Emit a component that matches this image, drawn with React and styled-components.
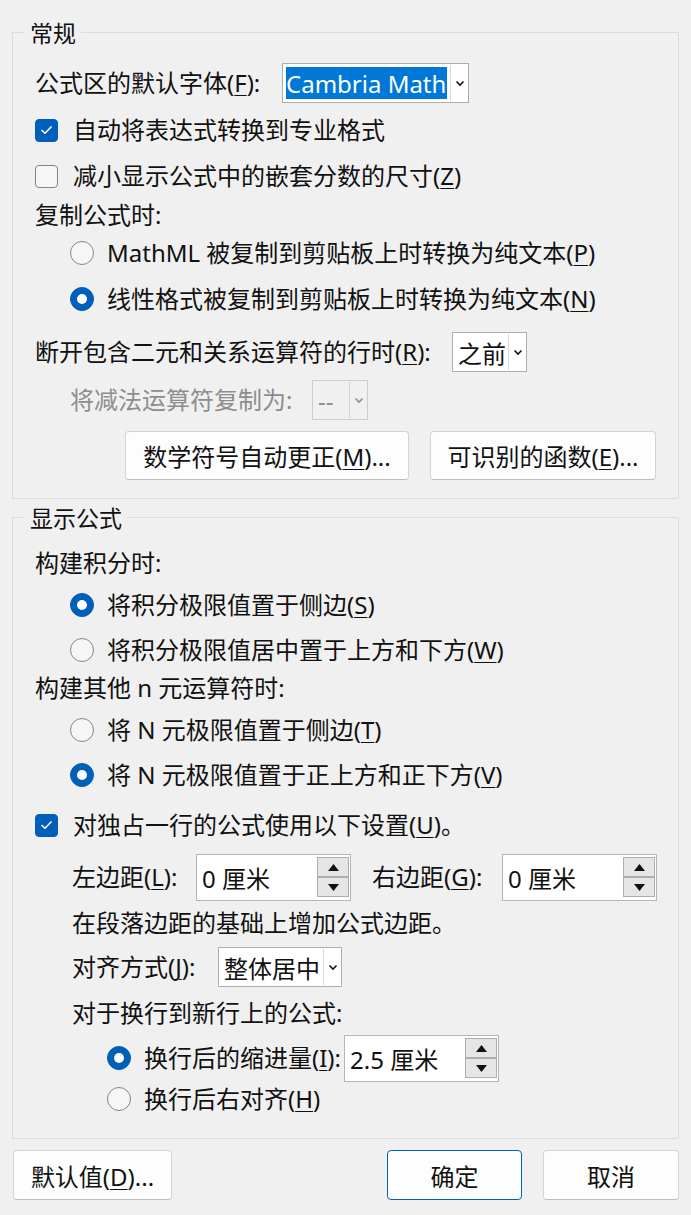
import React from 'react'
import styled, { createGlobalStyle } from 'styled-components'

const GlobalStyle = createGlobalStyle`
  html, body {
    margin: 0;
    padding: 0;
    background: #f0f0f0;
  }
  body {
    font-family: "Noto Sans", "Noto Sans CJK SC", sans-serif;
    font-size: 24px;
    color: #111;
  }
`

// 작은 아이콘들
const Chevron = ({ color = '#111' }) => (
  <svg width="10" height="7" viewBox="0 0 10 7">
    <path d="M1.5 1.5 L5 5 L8.5 1.5" fill="none" stroke={color} strokeWidth="1.6" />
  </svg>
)

const Tri = ({ down }) => (
  <svg width="11" height="7" viewBox="0 0 11 7">
    {down ? <polygon points="0,0 11,0 5.5,7" fill="#111" /> : <polygon points="0,7 11,7 5.5,0" fill="#111" />}
  </svg>
)

const Check = () => (
  <svg width="13" height="10" viewBox="0 0 13 10">
    <path d="M1.5 5 L5 8.3 L11.5 1.5" fill="none" stroke="#fff" strokeWidth="1.5" />
  </svg>
)

const App = () => {
  return (
    <>
      <GlobalStyle />
      <Dialog>
        <Group $top={32}>
          <Title>常规</Title>
          <Body $pad="18px 0 18px 22px">
            <Row $h={40}>
              <Text $w={247}>公式区的默认字体(<Key>F</Key>):</Text>
              <Combo $w={187} value="Cambria Math" selected />
            </Row>
            <Row $h={54}>
              <CheckBox checked />
              <Text>自动将表达式转换到专业格式</Text>
            </Row>
            <Row $h={38}>
              <CheckBox />
              <Text>减小显示公式中的嵌套分数的尺寸(<Key>Z</Key>)</Text>
            </Row>
            <Row $h={40}>
              <Text>复制公式时:</Text>
            </Row>
            <Row $h={36} $indent={35}>
              <Radio />
              <Text>MathML 被复制到剪贴板上时转换为纯文本(<Key>P</Key>)</Text>
            </Row>
            <Row $h={56} $indent={35}>
              <Radio checked />
              <Text>线性格式被复制到剪贴板上时转换为纯文本(<Key>N</Key>)</Text>
            </Row>
            <Row $h={50}>
              <Text $w={417}>断开包含二元和关系运算符的行时(<Key>R</Key>):</Text>
              <Combo $w={75} value="之前" />
            </Row>
            <Row $h={46} $indent={35}>
              <Text $w={242} $disabled>将减法运算符复制为:</Text>
              <Combo $w={56} value="--" disabled />
            </Row>
            <ButtonRow>
              <PushButton $w={284}>数学符号自动更正(<Key>M</Key>)...</PushButton>
              <PushButton $w={226}>可识别的函数(<Key>E</Key>)...</PushButton>
            </ButtonRow>
          </Body>
        </Group>

        <Group $top={18}>
          <Title>显示公式</Title>
          <Body $pad="13px 0 15px 22px">
            <Row $h={40}>
              <Text>构建积分时:</Text>
            </Row>
            <Row $h={44} $indent={35}>
              <Radio checked />
              <Text>将积分极限值置于侧边(<Key>S</Key>)</Text>
            </Row>
            <Row $h={46} $indent={35}>
              <Radio />
              <Text>将积分极限值居中置于上方和下方(<Key>W</Key>)</Text>
            </Row>
            <Row $h={30}>
              <Text>构建其他 n 元运算符时:</Text>
            </Row>
            <Row $h={54} $indent={35}>
              <Radio />
              <Text>将 N 元极限值置于侧边(<Key>T</Key>)</Text>
            </Row>
            <Row $h={36} $indent={35}>
              <Radio checked />
              <Text>将 N 元极限值置于正上方和正下方(<Key>V</Key>)</Text>
            </Row>
            <Row $h={64}>
              <CheckBox checked />
              <Text>对独占一行的公式使用以下设置(<Key>U</Key>)。</Text>
            </Row>
            <Row $h={40} $indent={37}>
              <Text $w={124}>左边距(<Key>L</Key>):</Text>
              <Spin value="0 厘米" />
              <Text $w={130} $gap={21}>右边距(<Key>G</Key>):</Text>
              <Spin value="0 厘米" />
            </Row>
            <Row $h={52} $indent={37}>
              <Text>在段落边距的基础上增加公式边距。</Text>
            </Row>
            <Row $h={36} $indent={37}>
              <Text $w={146}>对齐方式(<Key>J</Key>):</Text>
              <Combo $w={124} value="整体居中" />
            </Row>
            <Row $h={56} $indent={37}>
              <Text>对于换行到新行上的公式:</Text>
            </Row>
            <Row $h={34} $indent={72}>
              <Radio checked />
              <Text $w={200}>换行后的缩进量(<Key>I</Key>):</Text>
              <Spin value="2.5 厘米" />
            </Row>
            <Row $h={48} $indent={72}>
              <Radio />
              <Text>换行后右对齐(<Key>H</Key>)</Text>
            </Row>
          </Body>
        </Group>

        <Footer>
          <PushButton $w={159} $h={50}>默认值(<Key>D</Key>)...</PushButton>
          <FooterRight>
            <PushButton $w={135} $h={50} $primary>确定</PushButton>
            <PushButton $w={136} $h={50}>取消</PushButton>
          </FooterRight>
        </Footer>
      </Dialog>
    </>
  )
}

export default App

const Dialog = styled.div`
    width: 691px;
    height: 1215px;
    box-sizing: border-box;
    padding: 0 12px;
    overflow: hidden;
    background: #f0f0f0;
    border-radius: 0 0 9px 9px;
`
// 그룹 박스
const Group = styled.section`
    margin-top: ${p => p.$top}px;
    border: 1px solid #dcdcdc;
    display: flex;
    flex-direction: column;
`
const Title = styled.h2`
    margin: -12px 0 0 12px;
    padding: 0 5px;
    align-self: flex-start;
    background: #f0f0f0;
    font-size: 23px;
    font-weight: 400;
    line-height: 24px;
    white-space: nowrap;
`
const Body = styled.div`
    display: flex;
    flex-direction: column;
    padding: ${p => p.$pad};
`
const Row = styled.div`
    display: flex;
    align-items: center;
    height: ${p => p.$h}px;
    padding-left: ${p => p.$indent || 0}px;
    white-space: nowrap;
`
const Text = styled.span`
    display: inline-block;
    width: ${p => (p.$w ? `${p.$w}px` : 'auto')};
    flex-shrink: 0;
    margin-left: ${p => p.$gap || 0}px;
    color: ${p => (p.$disabled ? '#8d8d8d' : '#111')};
    line-height: 30px;
`
const Key = styled.span`
    text-decoration: underline;
    text-decoration-thickness: 1px;
    text-underline-offset: 3px;
`

// 체크박스
const CheckBox = ({ checked }) => (
  <Box $checked={checked}>{checked && <Check />}</Box>
)
const Box = styled.span`
    width: 23px;
    height: 23px;
    box-sizing: border-box;
    flex-shrink: 0;
    margin-right: 15px;
    border-radius: 4px;
    display: flex;
    align-items: center;
    justify-content: center;
    background: ${p => (p.$checked ? '#005fb8' : '#f6f6f6')};
    border: 1px solid ${p => (p.$checked ? '#005fb8' : '#858585')};
`

// 라디오 버튼
const Radio = ({ checked }) => <Dot $checked={checked} />
const Dot = styled.span`
    width: 24px;
    height: 24px;
    box-sizing: border-box;
    flex-shrink: 0;
    margin-right: 13px;
    border-radius: 50%;
    background: ${p => (p.$checked ? '#005fb8' : '#f6f6f6')};
    border: 1px solid ${p => (p.$checked ? '#005fb8' : '#858585')};
    display: flex;
    align-items: center;
    justify-content: center;
    &::after {
      content: '';
      display: ${p => (p.$checked ? 'block' : 'none')};
      width: 10px;
      height: 10px;
      border-radius: 50%;
      background: #fff;
    }
`

// 콤보박스
const Combo = ({ $w, value, selected, disabled }) => (
  <ComboBox $w={$w} $disabled={disabled}>
    <ComboValue $selected={selected} $disabled={disabled}>{value}</ComboValue>
    <ComboArrow>
      <Chevron color={disabled ? '#8d8d8d' : '#111'} />
    </ComboArrow>
  </ComboBox>
)
const ComboBox = styled.div`
    display: flex;
    width: ${p => p.$w}px;
    height: 40px;
    flex-shrink: 0;
    box-sizing: border-box;
    padding: 3px 0 3px 3px;
    background: ${p => (p.$disabled ? '#f0f0f0' : '#fff')};
    border: 1px solid ${p => (p.$disabled ? '#cccccc' : '#adadad')};
`
const ComboValue = styled.span`
    flex: 1;
    display: flex;
    align-items: center;
    margin-right: 3px;
    padding-left: ${p => (p.$selected ? 0 : 2)}px;
    background: ${p => (p.$selected ? '#0078d7' : 'transparent')};
    color: ${p => (p.$selected ? '#fff' : p.$disabled ? '#8d8d8d' : '#111')};
    font-size: 24px;
    overflow: hidden;
`
const ComboArrow = styled.span`
    width: 17px;
    margin: -2px 0;
    border-left: 1px solid #d6d6d6;
    display: flex;
    align-items: center;
    justify-content: center;
`

// 스핀 박스
const Spin = ({ value }) => (
  <SpinBox>
    <SpinText>{value}</SpinText>
    <SpinButtons>
      <SpinButton><Tri /></SpinButton>
      <SpinButton><Tri down /></SpinButton>
    </SpinButtons>
  </SpinBox>
)
const SpinBox = styled.div`
    display: flex;
    align-items: center;
    width: 155px;
    height: 47px;
    flex-shrink: 0;
    box-sizing: border-box;
    padding: 2px 1px 2px 5px;
    background: #fff;
    border: 1px solid #b5b5b5;
`
const SpinText = styled.span`
    flex: 1;
`
const SpinButtons = styled.div`
    display: flex;
    flex-direction: column;
    width: 32px;
`
const SpinButton = styled.span`
    height: 20px;
    box-sizing: border-box;
    display: flex;
    align-items: center;
    justify-content: center;
    background: #e5e5e5;
    border: 1px solid #adadad;
`

// 버튼
const ButtonRow = styled.div`
    display: flex;
    gap: 21px;
    margin-top: 8px;
    padding-left: 90px;
`
const PushButton = styled.button`
    width: ${p => p.$w}px;
    height: ${p => p.$h || 49}px;
    box-sizing: border-box;
    padding: 0;
    font: inherit;
    color: #111;
    white-space: nowrap;
    background: #fdfdfd;
    border: 1px solid ${p => (p.$primary ? '#005fb8' : '#d3d3d3')};
    border-bottom-color: ${p => (p.$primary ? '#005fb8' : '#bcbcbc')};
    border-radius: 4px;
`
const Footer = styled.div`
    display: flex;
    justify-content: space-between;
    margin-top: 11px;
    padding-left: 1px;
`
const FooterRight = styled.div`
    display: flex;
    gap: 21px;
`
